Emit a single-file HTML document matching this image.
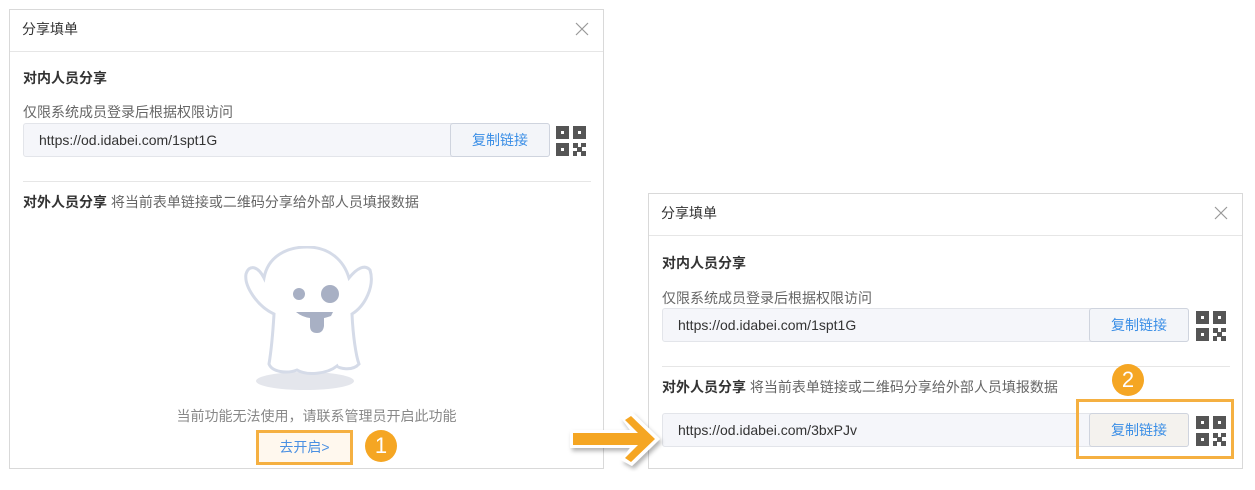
<!DOCTYPE html><html><head><meta charset="utf-8"><style>
body{margin:0;width:1255px;height:490px;background:#fff;position:relative;overflow:hidden;font-family:"Liberation Sans","Noto Sans CJK SC",sans-serif;color:#333}
.dlg{position:absolute;border:1px solid #d9d9d9;background:#fff;width:595px;box-sizing:border-box}
.hd{height:41px;border-bottom:1px solid #e6e6e6;font-size:14px;line-height:38px;padding-left:12px;position:relative}
.x{position:absolute;right:14px;top:12px}
.a{position:absolute;font-size:14px;white-space:nowrap}
.b{font-weight:bold;font-size:14px}
.g{color:#666;font-weight:normal}
.in{position:absolute;left:13px;width:527px;height:34px;background:#f5f6fa;border:1px solid #e3e5ea;border-radius:3px;box-sizing:border-box;font-size:14px;line-height:32px;padding-left:15px;color:#333}
.btn{position:absolute;right:-1px;top:-1px;width:100px;height:34px;border:1px solid #cfd4de;border-radius:3px;box-sizing:border-box;background:#f3f5f9;color:#3a8ee6;text-align:center;line-height:32px}
.qr{position:absolute;width:30px;height:30px}
.hr{position:absolute;left:13px;right:12px;height:1px;background:#e6e6e6}
.circ{position:absolute;width:32px;height:32px;border-radius:50%;background:#f5a623;color:#fff;font-size:22px;text-align:center;line-height:32px}
</style></head><body>
<svg width="0" height="0" style="position:absolute"><defs><g id="q"><rect x="0" y="0" width="13" height="13" fill="#555"/><rect x="17" y="0" width="13" height="13" fill="#555"/><rect x="0" y="17" width="13" height="13" fill="#555"/><rect x="5" y="5" width="3" height="3" fill="#fff"/><rect x="22" y="5" width="3" height="3" fill="#fff"/><rect x="5" y="22" width="3" height="3" fill="#fff"/><rect x="17" y="17" width="5" height="5" fill="#555"/><rect x="25" y="17" width="5" height="4" fill="#555"/><rect x="21" y="21" width="5" height="5" fill="#555"/><rect x="17" y="25" width="4" height="5" fill="#555"/><rect x="25" y="25" width="5" height="5" fill="#555"/></g>
<g id="cx"><path d="M1 1 L13 13 M13 1 L1 13" stroke="#999" stroke-width="1.2" fill="none"/></g></defs></svg>

<div class="dlg" style="left:9px;top:9px;height:460px">
 <div class="hd">分享填单<svg class="x" width="14" height="14"><use href="#cx"/></svg></div>
 <div class="a b" style="left:13px;top:58px">对内人员分享</div>
 <div class="a g" style="left:13px;top:92px">仅限系统成员登录后根据权限访问</div>
 <div class="in" style="top:113px">https://od.idabei.com/1spt1G<div class="btn">复制链接</div></div>
 <svg class="qr" style="left:546px;top:116px"><use href="#q"/></svg>
 <div class="hr" style="top:171px"></div>
 <div class="a" style="left:13px;top:182px"><span class="b">对外人员分享</span> <span class="g" style="font-size:14px">将当前表单链接或二维码分享给外部人员填报数据</span></div>
 <svg style="position:absolute;left:222px;top:236px" width="150" height="150" viewBox="0 0 150 150">
  <ellipse cx="73" cy="135" rx="49" ry="9" fill="#e4e6ec"/>
  <path d="M32 32 C36 10 55 1 75 1 C98 1 112 15 117 32 C125 22 133 18 138 24 C143 40 133 60 120 68 C121 90 124 110 127 118 C120 126 106 122 105 120 C95 128 75 130 65 124 C55 128 40 126 37 118 C40 100 41 85 42 68 C25 60 12 40 14 28 C17 18 26 20 32 32 Z" fill="#fff" stroke="#d5dbe8" stroke-width="3"/>
  <circle cx="67" cy="48" r="6" fill="#a8b0c4"/><circle cx="98" cy="48" r="9" fill="#a8b0c4"/>
  <path d="M64 66 L101 66 L99 70 Q93 72 92 72 L92 80 Q91 87 85 87 Q78 87 78 80 L78 72 Q70 71 64 66Z" fill="#a8b0c4"/>
 </svg>
 <div class="a g" style="left:0;right:0;text-align:center;top:396px;font-size:14px;color:#888;padding-left:20px">当前功能无法使用，请联系管理员开启此功能</div>
 <div style="position:absolute;left:246px;top:420px;width:97px;height:35px;border:3px solid #f5b041;box-sizing:border-box;background:#fff8ee;color:#4a90e2;font-size:14px;text-align:center;line-height:29px">去开启&gt;</div>
</div>
<div class="circ" style="left:365px;top:430px">1</div>

<div class="dlg" style="left:648px;top:193px;height:276px">
 <div class="hd">分享填单<svg class="x" width="14" height="14"><use href="#cx"/></svg></div>
 <div class="a b" style="left:13px;top:59px">对内人员分享</div>
 <div class="a g" style="left:13px;top:94px">仅限系统成员登录后根据权限访问</div>
 <div class="in" style="top:114px">https://od.idabei.com/1spt1G<div class="btn">复制链接</div></div>
 <svg class="qr" style="left:547px;top:117px"><use href="#q"/></svg>
 <div class="hr" style="top:172px"></div>
 <div class="a" style="left:13px;top:183px"><span class="b">对外人员分享</span> <span class="g" style="font-size:14px">将当前表单链接或二维码分享给外部人员填报数据</span></div>
 <div class="in" style="top:219px">https://od.idabei.com/3bxPJv<div class="btn" style="background:#f4f2ee">复制链接</div></div>
 <svg class="qr" style="left:547px;top:222px"><use href="#q"/></svg>
</div>
<div style="position:absolute;left:1076px;top:399px;width:158px;height:60px;border:3px solid #f5b041;box-sizing:border-box"></div>
<div class="circ" style="left:1112px;top:364px">2</div>

<svg style="position:absolute;left:562px;top:410px" width="110" height="65" viewBox="0 0 110 65">
 <defs><filter id="s"><feDropShadow dx="2" dy="3" stdDeviation="2" flood-opacity="0.3"/></filter></defs>
 <g filter="url(#s)">
 <path d="M8 20 L68 20 L59 8 L70 2 L98 29 L70 56 L59 50 L68 38 L8 38 Z" fill="#fff"/>
 </g>
 <path d="M11 23 L76 23 L63 10 L69 6 L93 29 L69 52 L63 48 L76 35 L11 35 Z" fill="#f5a623"/>
</svg>
</body></html>
